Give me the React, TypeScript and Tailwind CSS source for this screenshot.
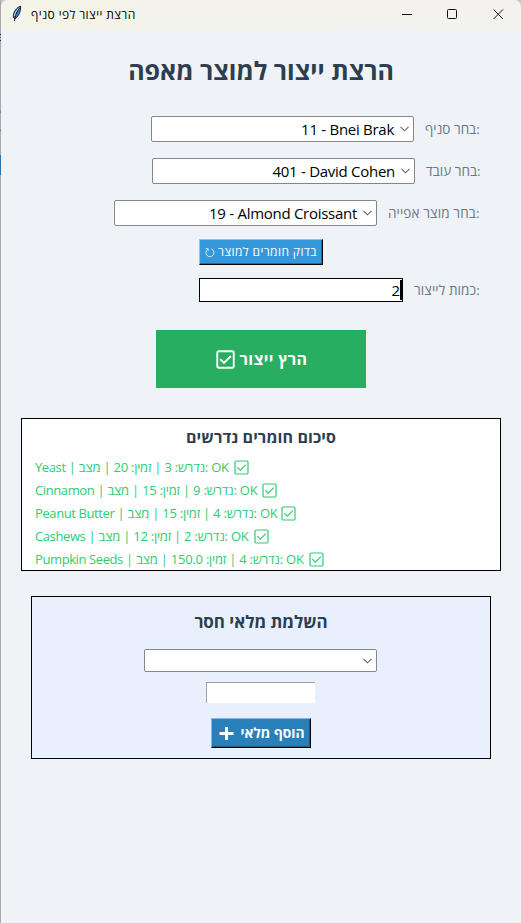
import React from "react";

const materials = [
  { name: "Yeast", details: " | נדרש: 3 | זמין: 20 | מצב: OK", width: "w-[194px]" },
  { name: "Cinnamon", details: " | נדרש: 9 | זמין: 15 | מצב: OK", width: "w-[222px]" },
  { name: "Peanut Butter", details: " | נדרש: 4 | זמין: 15 | מצב: OK", width: "w-[241px]" },
  { name: "Cashews", details: " | נדרש: 2 | זמין: 12 | מצב: OK", width: "w-[214px]" },
  { name: "Pumpkin Seeds", details: " | נדרש: 4 | זמין: 150.0 | מצב: OK", width: "w-[269px]" },
];

function Chevron() {
  return (
    <svg width="9" height="6" viewBox="0 0 9 6" className="shrink-0" fill="none" stroke="#666" strokeWidth="1.1">
      <path d="M0.5 0.8 4.5 4.8 8.5 0.8" />
    </svg>
  );
}

function Checkbox({ size, weight }: { size: number; weight: number }) {
  return (
    <svg width={size} height={size} viewBox="0 0 15 15" className="shrink-0" fill="none" stroke="currentColor" strokeWidth={weight}>
      <rect x="1" y="1" width="13" height="13" rx="1.3" />
      <path d="M3.3 7.2 6.3 10.2 11.8 4.7" />
    </svg>
  );
}

function Field({ label, value, labelClass }: { label: string; value: string; labelClass: string }) {
  return (
    <div className="flex h-[26px] items-center justify-end gap-[11px]">
      <div className="flex h-[26px] w-[263px] items-center justify-end gap-[6px] rounded-[2px] border border-[#868686] bg-white pr-[4px] text-[15px] text-black">
        <span className="whitespace-nowrap tracking-[-0.28px]">{value}</span>
        <Chevron />
      </div>
      <span className={`whitespace-nowrap text-[13.5px] text-[#6c7681] ${labelClass}`}>{label}</span>
    </div>
  );
}

export default function App() {
  return (
    <div dir="ltr" className="flex h-[923px] w-[521px] overflow-hidden bg-[#c9c9cb] font-['Open_Sans','Noto_Sans',sans-serif]">
      {/* Sliver of the window behind */}
      <div className="flex w-px shrink-0 flex-col bg-[#a9a9ab]">
        <div className="mt-[34px] h-px bg-[#222]" />
        <div className="mt-[2px] h-px bg-[#3b7c80]" />
        <div className="mt-[2px] h-px bg-[#222]" />
        <div className="mt-[69px] h-[3px] bg-[#5b95c8]" />
        <div className="mt-[17px] h-px bg-[#666]" />
        <div className="mt-[24px] h-[20px] bg-[#2c74ad]" />
      </div>
      <div className="flex w-[520px] flex-col rounded-t-[7px] bg-[#eff3f8]">
        <header className="flex h-[30px] shrink-0 items-center rounded-t-[7px] bg-gradient-to-r from-[#f4f4e8] to-[#f3f2ef] pl-[10px] text-black">
          <svg width="12" height="17" viewBox="0 0 12 17" className="mr-[8px] mt-[-3px] shrink-0">
            <path d="M9.6 1.2C5.5 2.2 1.8 7.5 2.4 12.5L4 13.5C7.8 11.5 10 6 9.6 1.2Z" fill="#4285cf" stroke="#172333" strokeWidth="1" />
            <path d="M8.5 3C5.5 7 4 11 3.5 16" stroke="#111" strokeWidth="1" fill="none" />
            <path d="M7.5 3.5C5 6 4 8 3.5 11" stroke="#b6dcff" strokeWidth="1" fill="none" />
          </svg>
          <span className="whitespace-nowrap text-[12px] tracking-[0.4px]">הרצת ייצור לפי סניף</span>
          <svg width="104" height="12" viewBox="0 0 104 12" className="ml-auto mr-[16px] mt-[-2px]" fill="none" stroke="#111" strokeWidth="1">
            <path d="M1 6.5H11" />
            <rect x="46.5" y="1.5" width="9" height="9" rx="1" />
            <path d="M92.5 1.5 102 11M102 1.5 92.5 11" />
          </svg>
        </header>

        <main className="flex flex-col">
          <h1 className="mt-[20px] h-[40px] whitespace-nowrap text-center text-[25px] font-bold leading-[40px] text-[#2c3e50]">
            הרצת ייצור למוצר מאפה
          </h1>

          <section className="mt-[26px] flex flex-col gap-4 pr-10">
            <Field label="בחר סניף:" value="11 - Bnei Brak" labelClass="w-[56px]" />
            <Field label="בחר עובד:" value="401 - David Cohen" labelClass="w-[55px]" />
            <Field label="בחר מוצר אפייה:" value="19 - Almond Croissant" labelClass="w-[93px] tracking-[0.12px]" />
          </section>

          <button className="ml-[198px] mt-[13px] flex h-[26px] w-[124px] items-center justify-center gap-[3px] border border-b-black border-l-[#83c5f1] border-r-black border-t-[#83c5f1] bg-[#3498db] text-[12px] text-white shadow-[inset_-1px_-1px_0_#246a99]">
            <svg width="10" height="11" viewBox="0 0 10 11" fill="none" stroke="white" strokeWidth="0.8">
              <path d="M6.4 1.9A4 4 0 1 1 2.6 2.4M0.8 1.7H3.2V4.1" />
            </svg>
            <span className="whitespace-nowrap tracking-[0.4px]">בדוק חומרים למוצר</span>
          </button>

          <div className="mt-[13px] flex h-[24px] items-center justify-end gap-[11px] pr-10">
            <div className="flex h-[24px] w-[204px] items-center justify-end border border-black bg-white text-[15px] text-black">
              <span>2</span>
              <span className="h-5 w-[2px] bg-black" />
            </div>
            <span className="w-[67px] whitespace-nowrap text-[13.5px] tracking-[0.1px] text-[#6c7681]">כמות לייצור:</span>
          </div>

          <button className="ml-[155px] mt-[28px] flex h-[58px] w-[210px] items-center justify-center gap-[5px] bg-[#27ae60] pl-px text-[16px] font-bold text-white">
            <Checkbox size={19} weight={1.5} />
            <span className="whitespace-nowrap tracking-[0.35px]">הרץ ייצור</span>
          </button>

          <section className="ml-[20px] mt-[30px] h-[153px] w-[480px] overflow-hidden border border-black bg-white">
            <h2 className="mt-[6px] h-6 text-center text-[16px] font-bold leading-6 tracking-[0.1px] text-[#2c3e50]">סיכום חומרים נדרשים</h2>
            <ul className="ml-[13px] mt-[7px] text-[13px] text-[#2ecc71]">
              {materials.map((item) => (
                <li key={item.name} className="flex h-[23px] items-center gap-[5px]">
                  <span className={`whitespace-nowrap tracking-[-0.23px] ${item.width}`}>
                    <span className="tracking-[-0.4px]">{item.name}</span>
                    {item.details}
                  </span>
                  <Checkbox size={15} weight={1.2} />
                </li>
              ))}
            </ul>
          </section>

          <section className="ml-[30px] mt-[25px] flex h-[163px] w-[460px] flex-col items-center border border-black bg-[#e8f0fe]">
            <h2 className="mt-[13px] h-6 text-[17px] font-bold leading-6 tracking-[-0.05px] text-[#2c3e50]">השלמת מלאי חסר</h2>
            <div className="mr-[1px] mt-[15px] flex h-[23px] w-[233px] items-center justify-end rounded-[2px] border border-[#868686] bg-white pr-1">
              <Chevron />
            </div>
            <div className="mr-[1px] mt-[10px] h-[21px] w-[109px] border-l border-t border-[#a0a0a0] bg-white" />
            <button className="mt-[15px] flex h-[30px] w-[100px] items-center justify-center gap-[6px] border border-b-black border-l-[#80b8f7] border-r-black border-t-[#80b8f7] bg-[#2980b9] pl-[2px] text-[13.8px] font-bold text-white shadow-[inset_-1px_-1px_0_#1c587f]">
              <svg width="15" height="13" viewBox="0 0 15 13" stroke="white" strokeWidth="3" className="shrink-0">
                <path d="M0.5 6.5H14.5M7.5 0V13" />
              </svg>
              <span className="whitespace-nowrap">הוסף מלאי</span>
            </button>
          </section>
        </main>
      </div>
    </div>
  );
}
